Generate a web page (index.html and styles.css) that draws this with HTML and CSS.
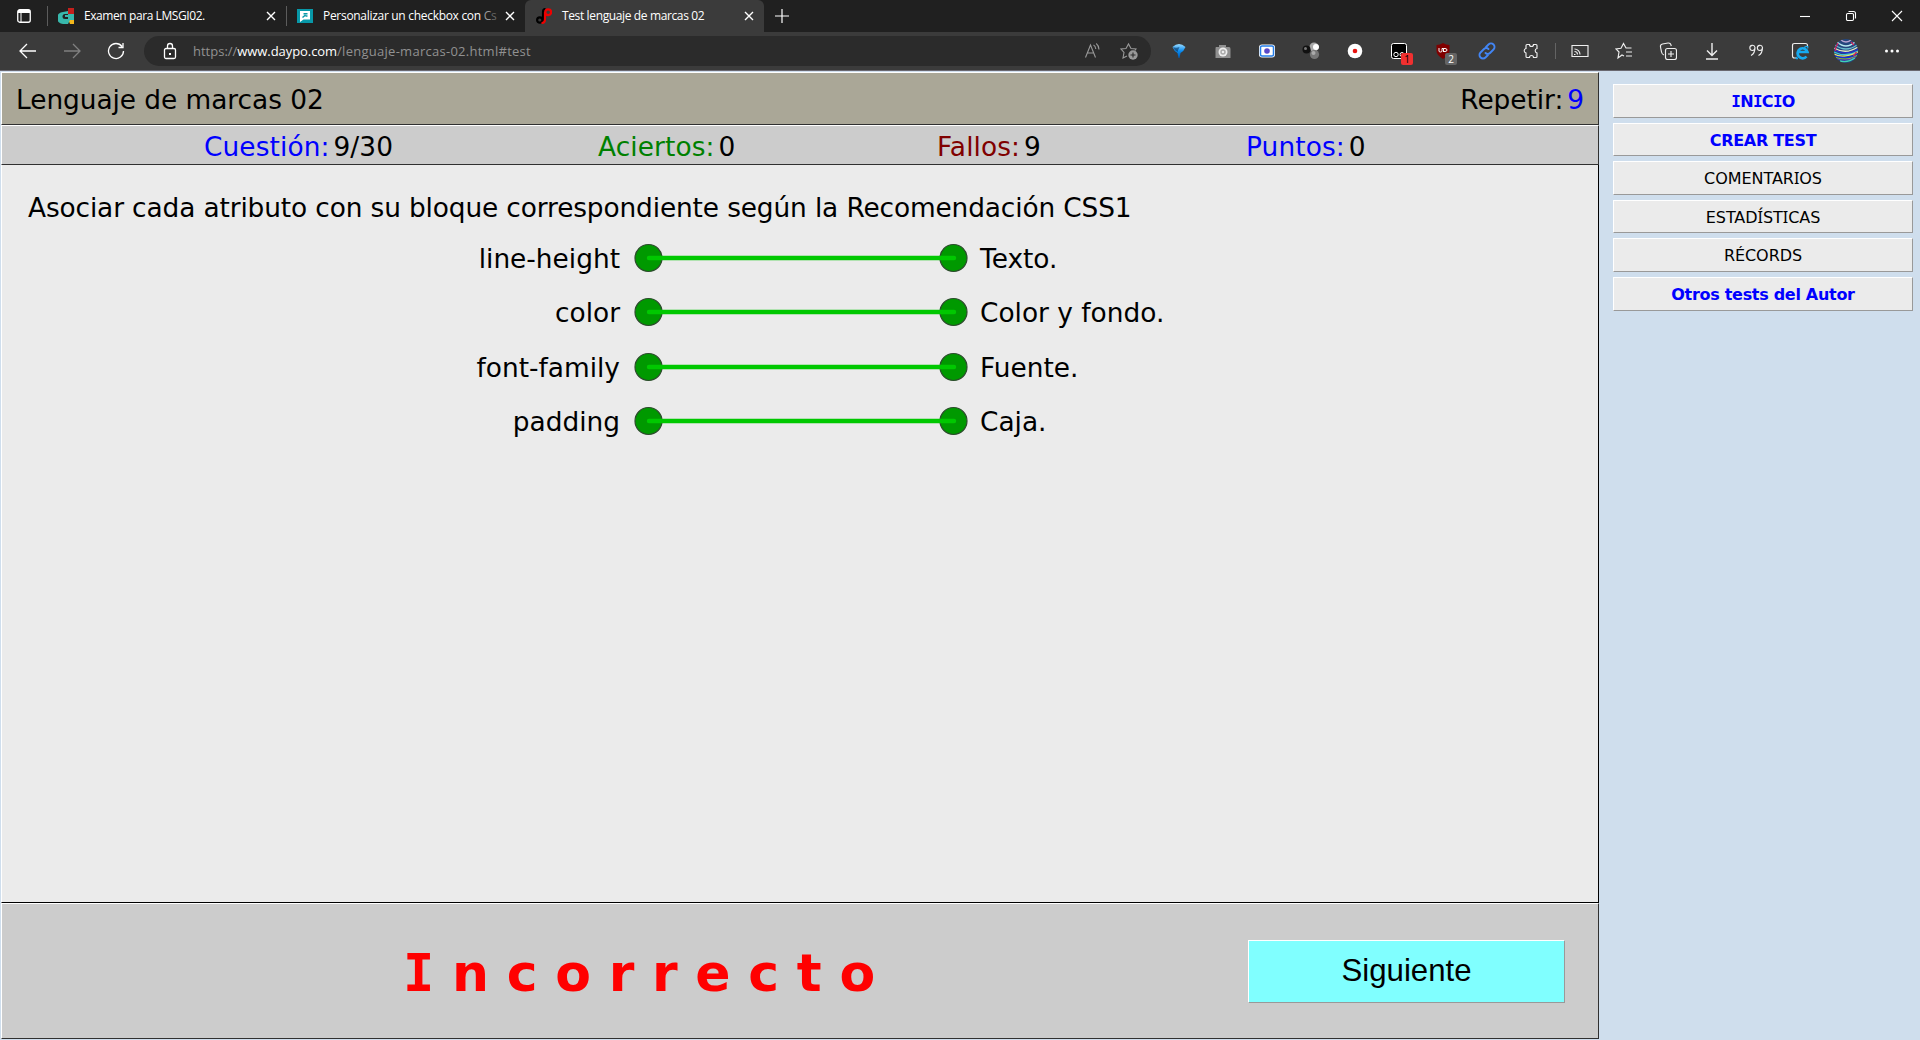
FILE: index.html
```html
<!DOCTYPE html>
<html lang="es">
<head>
<meta charset="utf-8">
<title>Test lenguaje de marcas 02</title>
<link rel="stylesheet" href="styles.css">
</head>
<body>
<header class="tabs">
  <div class="workspace"><svg width="14" height="14" viewBox="0 0 14 14" fill="none" stroke="#fff"><rect x=".75" y=".75" width="12.5" height="12.5" rx="2" stroke-width="1.3"/><path d="M1 2.5h12" stroke-width="3"/><path d="M4 3v10"/></svg></div>
  <div class="tab">
    <svg class="fav" viewBox="0 0 16 16"><path d="M10 0h6v6h-6z" fill="#c4201c"/><path d="M10 11h6v5h-4z" fill="#f4b81c"/><path d="M10 3v3h6v6h-4l-2 4H5a6 6 0 0 1 0-12z" fill="#38b8ac"/><path d="M10 6v5H7a2 2 0 0 1 0-5z" fill="#222"/><path d="M7 7h3v2H7z" fill="#38b8ac"/></svg>
    <span class="title t1">Examen para LMSGI02.</span><svg class="x" viewBox="0 0 10 10"><path d="M1 1l8 8M9 1l-8 8"/></svg>
  </div>
  <div class="tab">
    <svg class="fav" viewBox="0 0 16 16"><path d="M0 1h16v14H0z" fill="#0898a8"/><path d="M3 3h10v8.500H6.500L3 14z" fill="#fff"/><path d="M5.500 9.500l3-2.500M6.500 5.700h4M8.500 8h2" stroke="#0898a8" stroke-width="1.500"/></svg>
    <span class="title t2">Personalizar un checkbox con <span class="dim">C</span><span class="dimmer">s</span></span><svg class="x" viewBox="0 0 10 10"><path d="M1 1l8 8M9 1l-8 8"/></svg>
  </div>
  <div class="tab active">
    <svg class="fav" viewBox="0 0 16 16" fill="none" stroke-width="2.200"><circle cx="3.800" cy="12" r="2.700" stroke="#000"/><path d="M7 14V4q0-3 2.500-3" stroke="#000"/><path d="M5.500 15q3.500 0 3.500-4V4" stroke="#f00000"/><circle cx="12.200" cy="4.200" r="2.900" stroke="#f00000"/></svg>
    <span class="title t3">Test lenguaje de marcas 02</span><svg class="x" viewBox="0 0 10 10"><path d="M1 1l8 8M9 1l-8 8"/></svg>
  </div>
  <svg class="plus" width="16" height="16" viewBox="0 0 16 16"><path d="M8 1v14M1 8h14"/></svg>
  <div class="winctl">
    <svg viewBox="0 0 12 12"><path d="M1 6.5h10"/></svg>
    <svg viewBox="0 0 12 12"><rect x="1.5" y="3.5" width="7" height="7" rx="1.2"/><path d="M3.5 1.5h5a2 2 0 0 1 2 2v5"/></svg>
    <svg viewBox="0 0 12 12"><path d="M1 1l10 10M11 1L1 11"/></svg>
  </div>
</header>
<nav class="toolbar">
  <div class="nav">
    <svg viewBox="0 0 18 18"><path d="M17 9H1M8 2L1 9l7 7"/></svg>
    <svg class="off" viewBox="0 0 18 18"><path d="M1 9h16M10 2l7 7-7 7"/></svg>
    <svg viewBox="0 0 18 18"><path d="M15 4.5A7.5 7.5 0 1 0 16.5 9M16 1v4.5h-4.5"/></svg>
  </div>
  <div class="address">
    <svg class="lock" viewBox="0 0 14 18"><rect x="1.5" y="6.5" width="11" height="10" rx="1.5"/><path d="M4.500 6V4a2.500 2.500 0 0 1 5 0v2"/><path d="M6 11h2v2H6z" fill="#fff" stroke="none"/></svg>
    <span class="url"><span class="scheme">https://</span><b>www.daypo.com</b><span class="path">/lenguaje-marcas-02.html#test</span></span>
    <svg class="read" viewBox="0 0 18 18"><path d="M1.500 15.500L6.500 3l5 12.500M3.200 11h6.600M9.500 3q2 1 2.300 4M12.200 1.500q2.600 2 2.800 6"/></svg>
    <svg class="addfav" viewBox="0 0 18 18"><path d="M7 14l-4 2 1-5.500L1 7l5-.5L8.500 2 11 6.500l5 .5-1 1.500"/><circle cx="13" cy="13" r="4.700" fill="#999" stroke="none"/><path d="M13 10.500v5M10.500 13h5" stroke="#2b2b2b"/></svg>
  </div>
  <div class="exts">
    <div><svg viewBox="0 0 18 18"><defs><linearGradient id="gem" x2="0" y2="1"><stop stop-color="#9cdcff"/><stop offset=".5" stop-color="#0a8cf0"/><stop offset="1" stop-color="#0058b0"/></linearGradient></defs><path d="M2.500 5Q9-1 15.500 5 14 9 10.500 11L9.500 16h-1L7.500 11Q4 9 2.500 5z" fill="url(#gem)"/><path d="M3 5q3 1.500 6.500 0Q8 8 7.500 10 4 8 3 5z" fill="#001c40" opacity=".5"/></svg></div>
    <div><svg viewBox="0 0 18 18"><path d="M2 5h3V3h7v2h3q1.500 0 1.500 2v9h-15V7q0-2 .5-2z" fill="#909090"/><circle cx="9" cy="10" r="4.500" fill="#eee"/><circle cx="9" cy="10" r="2" fill="none" stroke="#aaa" stroke-width="1.500"/></svg></div>
    <div><svg viewBox="0 0 18 18"><rect x="1" y="2.500" width="16" height="13" rx="3" fill="#fff"/><rect x="2.500" y="4" width="13" height="10" rx="1.500" fill="#fff" stroke="#257de8" stroke-width="1.500"/><circle cx="9" cy="9" r="2.800" fill="#5948c8"/></svg></div>
    <div><svg viewBox="0 0 18 18"><circle cx="12" cy="5" r="4.500" fill="#aaa"/><circle cx="14" cy="5" r="3" fill="#fff"/><circle cx="4.500" cy="7.500" r="4" fill="#111"/><circle cx="3.500" cy="6.500" r="1.500" fill="#777"/><circle cx="12.500" cy="12.500" r="4.600" fill="#777"/><circle cx="11.500" cy="11" r="2" fill="#aaa"/></svg></div>
    <div><svg viewBox="0 0 18 18"><circle cx="9" cy="9" r="7.300" fill="#fff"/><circle cx="9" cy="9" r="2.300" fill="#e81410"/></svg></div>
    <div><svg viewBox="0 0 18 18"><rect x="1.500" y="1.500" width="15" height="15" rx="2" fill="#000" stroke="#fff"/><circle cx="6" cy="12.500" r="2.200" fill="none" stroke="#fff"/><circle cx="12" cy="12.500" r="2" fill="none" stroke="#fff"/></svg><em class="badge red">1</em></div>
    <div><svg viewBox="0 0 18 18"><path d="M9 1q3 2 6.500 2v6q0 4-6.500 8Q2.500 13 2.500 9V3Q6 3 9 1z" fill="#800000"/><path d="M5 6v3q0 1 1.500 1T8 9V6.500h1.500V10M9.500 6.500H11q2 0 2 1.500t-2 1.500H9.500" fill="none" stroke="#fff"/></svg><em class="badge gray">2</em></div>
    <div><svg viewBox="0 0 18 18" fill="none" stroke="#4285f4" stroke-width="1.900" stroke-linecap="round"><path d="M8 5l2.500-2.500a3.200 3.200 0 0 1 5 5L12 11a3.200 3.200 0 0 1-4.500 0M10 13l-2.500 2.500a3.200 3.200 0 0 1-5-5L6 7a3.200 3.200 0 0 1 4.500 0"/></svg></div>
    <div><svg class="line" viewBox="0 0 18 18"><path d="M5 2.500h2.500a2 2 0 0 0 4 0H14q1 0 1 1v3a2.300 2.300 0 0 0 0 4.500v3.500q0 1-1 1h-2.500a2 2 0 0 0-4 0H5q-1 0-1-1v-3.500a2.300 2.300 0 0 1 0-4.500v-3q0-1 1-1z"/></svg></div>
  </div>
  <div class="actions">
    <div><svg class="line" viewBox="0 0 18 18"><path d="M1 3.500h16v11H1zM3 12.500h1.500M3.500 9.500a3 3 0 0 1 3 3M3.500 7a5.500 5.500 0 0 1 5.500 5.500"/></svg></div>
    <div><svg class="line" viewBox="0 0 18 18"><path d="M9 14l-2-1-4 3 1-6L1 7l5-.7L8.500 1.500 11 6h5.500M11 10h6M11 14h6"/></svg></div>
    <div><svg class="line" viewBox="0 0 18 18"><rect x="6.500" y="6.500" width="11" height="11" rx="2"/><path d="M12 9v6M9 12h6M5 13q-2-.5-2.500-3L1.500 5Q1 2.500 3.500 2L9 1q2.500-.3 3 2l.3 1"/></svg></div>
    <div><svg class="line" viewBox="0 0 18 18"><path d="M9 1v12M4 8.500l5 5 5-5M3 17h12" stroke-width="1.400"/></svg></div>
    <div><svg class="line" viewBox="0 0 18 18"><path d="M8 5.500a2.600 2.600 0 1 0-2.500 3Q8 8.500 8 5.500zm0 0q0 6-4 8M15.500 5.500a2.600 2.600 0 1 0-2.500 3q2.500 0 2.500-3zm0 0q0 6-4 8"/></svg></div>
    <div><svg class="line" viewBox="0 0 18 18"><path d="M6 16H3.500q-2 0-2-2V3.500q0-2 2-2h11q2 0 2 2V5"/><g stroke="#16aaf0" stroke-width="2.700"><path d="M15.500 14.500a5 5 0 1 1 1-4.500H8"/><path d="M6 15q-2 2 1 1.500M13 5.500q5-2.500 3.500 1" stroke-width="1.300"/></g></svg></div>
    <div class="avatar-cell"><svg class="avatar" viewBox="0 0 24 24"><defs><clipPath id="disc"><circle cx="12" cy="12" r="12"/></clipPath></defs><g clip-path="url(#disc)" fill="none" stroke-width="1.300"><path d="M0 0h24v24H0z" fill="#24467c"/><path d="M3 3q9 8 18 0" stroke="#b8e8ee"/><path d="M6 0q6 6 12 0" stroke="#b8a4d0"/><path d="M1 6q11 8 22 0" stroke="#69bdcd"/><path d="M0 9q12 7 24-1" stroke="#e0e4c4"/><path d="M0 11q14 6 24-1" stroke="#2430c9"/><path d="M0 13q12 6 24-1" stroke="#40c3d4"/><path d="M0 15q9 5 24-2" stroke="#e8e070"/><path d="M1 17q12 4 24-2" stroke="#1a28dc"/><path d="M2 18.500q12 4 21-2" stroke="#8abf34"/><path d="M3 20q10 3 19-2" stroke="#5038c0"/><path d="M6 22q8 2 15-3" stroke="#40d3b4"/><path d="M1.500 8v4M22.500 13l-3 4M4 4l-2 4M17 3l3 3" stroke="#cf265c"/></g></svg></div>
    <div><svg viewBox="0 0 18 18" fill="#fff"><circle cx="3.500" cy="9" r="1.500"/><circle cx="9" cy="9" r="1.500"/><circle cx="14.500" cy="9" r="1.500"/></svg></div>
  </div>
</nav>
<div class="page">
  <main class="quiz">
    <div class="head"><span>Lenguaje de marcas 02</span><span class="repeat">Repetir:<span class="num blue">9</span></span></div>
    <div class="stats">
      <div><span class="blue">Cuestión:</span><span class="num">9/30</span></div>
      <div><span class="green">Aciertos:</span><span class="num">0</span></div>
      <div><span class="maroon">Fallos:</span><span class="num">9</span></div>
      <div><span class="blue">Puntos:</span><span class="num">0</span></div>
    </div>
    <section class="question">
      <p class="prompt">Asociar cada atributo con su bloque correspondiente según la Recomendación CSS1</p>
      <div class="pair"><span class="left">line-height</span><svg class="link" viewBox="0 0 334 30"><circle cx="14.500" cy="15" r="13.500"/><circle cx="319.500" cy="15" r="13.500"/><path d="M15 15h305"/></svg><span>Texto.</span></div>
      <div class="pair"><span class="left">color</span><svg class="link" viewBox="0 0 334 30"><circle cx="14.500" cy="15" r="13.500"/><circle cx="319.500" cy="15" r="13.500"/><path d="M15 15h305"/></svg><span>Color y fondo.</span></div>
      <div class="pair"><span class="left">font-family</span><svg class="link" viewBox="0 0 334 30"><circle cx="14.500" cy="15" r="13.500"/><circle cx="319.500" cy="15" r="13.500"/><path d="M15 15h305"/></svg><span>Fuente.</span></div>
      <div class="pair"><span class="left">padding</span><svg class="link" viewBox="0 0 334 30"><circle cx="14.500" cy="15" r="13.500"/><circle cx="319.500" cy="15" r="13.500"/><path d="M15 15h305"/></svg><span>Caja.</span></div>
    </section>
    <footer class="result"><strong><span class="slab">I</span>ncorrecto</strong><button>Siguiente</button></footer>
  </main>
  <aside class="side">
    <a class="main tight"><span class="slab">I</span>N<span class="slab">I</span>C<span class="slab">I</span>O</a>
    <a class="main">CREAR TEST</a>
    <a>COMENTAR<span class="serif-i">I</span>OS</a>
    <a>ESTAD<span class="serif-i">Í</span>ST<span class="serif-i">I</span>CAS</a>
    <a>RÉCORDS</a>
    <a class="main">Otros tests del Autor</a>
  </aside>
</div>
</body>
</html>
```
FILE: styles.css
```css
* { box-sizing: border-box; }
body { margin: 0; height: 1040px; overflow: hidden; display: flex; flex-direction: column; background: #cfdeed; font-family: "DejaVu Sans", sans-serif; color: #000; }
svg { display: block; flex: none; }

/* tab strip */
.tabs { height: 32px; flex: none; display: flex; align-items: center; background: #202020; color: #fff; font: 12px "Open Sans", sans-serif; }
.workspace { width: 47px; padding-left: 17px; }
.tab { width: 239px; height: 32px; display: flex; align-items: center; padding: 0 10px; position: relative; }
.tab::before { content: ""; position: absolute; left: 0; top: 6px; width: 1px; height: 20px; background: #5c5c5c; }
.tab.active { background: #3b3b3b; border-radius: 6px 6px 0 0; }
.tab.active::before { display: none; }
.fav { width: 16px; height: 16px; margin: 0 10px 0 1px; }
.title { flex: 1; white-space: nowrap; line-height: 18px; }
.t1 { letter-spacing: -.42px; }
.t2 { letter-spacing: -.3px; }
.t3 { letter-spacing: -.37px; }
.dim { color: #999; }
.dimmer { color: #666; }
.x { width: 10px; height: 10px; stroke: #fff; stroke-width: 1.4; }
.plus { margin-left: 10px; fill: none; stroke: #fff; stroke-width: 1.2; }
.winctl { margin-left: auto; display: flex; gap: 34px; padding-right: 17px; }
.winctl svg { width: 12px; height: 12px; fill: none; stroke: #fff; stroke-width: 1.1; }

/* toolbar */
.toolbar { height: 39px; flex: none; display: flex; align-items: center; background: #3b3b3b; border-bottom: 1px solid #6a6870; }
.nav { width: 144px; display: flex; gap: 26px; padding-left: 19px; }
.nav svg { width: 18px; height: 18px; fill: none; stroke: #fff; stroke-width: 1.3; }
.nav .off { stroke: #808080; }
.address { width: 1007px; height: 30px; border-radius: 15px; background: #2b2b2b; display: flex; align-items: center; padding: 0 13px 0 19px; }
.address svg { width: 18px; height: 18px; fill: none; stroke: #999; stroke-width: 1.1; }
.address .lock { width: 14px; stroke: #fff; stroke-width: 1.3; }
.url { margin-left: 16px; font: 13px "Open Sans", sans-serif; color: #919191; white-space: nowrap; }
.url b { font-weight: 400; color: #fff; letter-spacing: -.07px; }
.path { letter-spacing: .27px; }
.read { margin-left: auto; }
.addfav { margin-left: 18px; }
.exts { display: flex; margin-left: 6px; position: relative; }
.exts::after { content: ""; position: absolute; right: -3px; top: 11px; width: 1px; height: 16px; background: #646464; }
.exts > div, .actions > div { width: 44px; height: 38px; display: flex; align-items: center; justify-content: center; position: relative; }
.exts svg, .actions svg { width: 18px; height: 18px; }
.line { fill: none; stroke: #eee; stroke-width: 1.15; }
.actions { display: flex; margin-left: 5px; }
.actions .avatar-cell { width: 48px; }
.actions .avatar { width: 24px; height: 24px; }
.badge { position: absolute; left: 24px; top: 21px; width: 12px; height: 12px; border-radius: 2px; font: 10px/12px "Open Sans", sans-serif; text-align: center; }
.red { background: #f03030; color: #000; }
.gray { background: #646464; color: #fff; }

/* page */
.page { flex: 1; display: flex; padding: 1px 7px 1px 1px; font-size: 26.4px; }
.quiz { width: 1598px; display: flex; flex-direction: column; }
.head, .stats, .result { border: 1px solid #303030; border-top-color: #fff; border-left-color: #fff; }
.head { height: 53px; background: #aaa797; display: flex; align-items: center; justify-content: space-between; padding: 1px 14px 0 14px; letter-spacing: -.05px; }
.num { margin-left: 4px; }
.blue { color: #00f; }
.green { color: #008000; }
.maroon { color: #800000; }
.stats { height: 40px; background: #ccc; display: grid; grid-template-columns: 394px 339px 309px 1fr; align-items: center; padding: 2px 0 0 202px; white-space: nowrap; letter-spacing: .1px; }
.question { height: 738px; background: #ebebeb; border: 1px solid #000; border-top: 0; border-left-color: #fff; padding: 27px 26px 26px; }
.prompt { margin: 0 0 19px; line-height: 32px; white-space: nowrap; letter-spacing: -.135px; }
.pair { height: 54.45px; display: flex; align-items: flex-start; line-height: 31px; }
.left { width: 592px; text-align: right; }
.link { width: 334px; height: 30px; margin: 0 12px 0 14px; }
.link circle { fill: #009900; stroke: #2c4c2c; stroke-width: 1.2; }
.link path { stroke: #00c800; stroke-width: 4.4; stroke-linecap: round; }
.result { height: 136px; background: #ccc; display: flex; align-items: center; }
.result strong { width: 1246px; padding: 4px 0 0 401px; color: red; font-size: 52px; letter-spacing: 17.7px; white-space: nowrap; }
.slab { font-family: "DejaVu Sans Mono", monospace; }
.serif-i { font-family: "Noto Sans", sans-serif; line-height: 1; }
button { width: 317px; height: 63px; padding: 0; background: #80ffff; border: 1px solid #999; border-top-color: #fff; border-left-color: #fff; font: 31.2px "Liberation Sans", Arial, sans-serif; color: #000; }
.side { width: 300px; margin-left: 14px; padding-top: 12px; display: flex; flex-direction: column; gap: 5px; font-size: 16px; }
.side a { height: 33.6px; background: #ebebeb; border: 1px solid #999; border-top-color: #fff; border-left-color: #fff; text-align: center; line-height: 33px; letter-spacing: -.05px; }
.side .main { color: #00f; font-weight: 700; letter-spacing: -.3px; }
.side .tight { letter-spacing: -.7px; }
```
